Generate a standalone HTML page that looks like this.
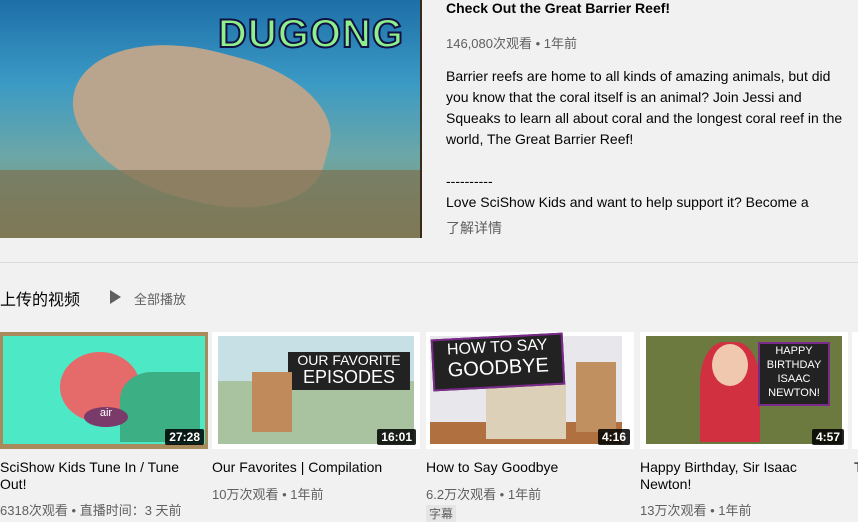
<!DOCTYPE html>
<html><head><meta charset="utf-8"><style>
body{margin:0;width:858px;height:516px;overflow:hidden;background:#f1f1f1;font-family:"Liberation Sans","Noto Sans CJK SC",sans-serif;position:relative}
.a{position:absolute}
.big{left:0;top:0;width:420px;height:238px;background:linear-gradient(180deg,#1d6fa8 0%,#3b9ac4 35%,#6ba7a8 65%,#8a8a60 100%);border-right:2px solid #3a2a1a;overflow:hidden}
.t{color:#030303;font-size:14px}
.g{color:#606060;font-size:13px}
.th{top:332px;width:208px;height:117px;overflow:hidden}
.dur{background:rgba(0,0,0,.85);color:#fff;font-size:12px;font-weight:bold;padding:1px 4px;border-radius:2px;right:4px;bottom:4px}
.ti{font-size:14px;color:#030303;line-height:17px;top:459px;width:200px}
.m{font-size:13px;color:#606060;top:484px}
</style></head><body>
<div class="a big">
  <div class="a" style="left:70px;top:50px;width:260px;height:150px;border-radius:50% 40% 45% 50%;background:#b9a58e;transform:rotate(15deg)"></div>
  <div class="a" style="left:0;top:170px;width:420px;height:68px;background:#7a7050;opacity:.7"></div>
  <div class="a" style="left:218px;top:12px;font-size:40px;font-weight:bold;color:#8ef08a;letter-spacing:1px;-webkit-text-stroke:2px #114">DUGONG</div>
</div>
<div class="a t" style="left:446px;top:0;font-weight:bold">Check Out the Great Barrier Reef!</div>
<div class="a g" style="left:446px;top:33px">146,080次观看 • 1年前</div>
<div class="a t" style="left:446px;top:66px;line-height:21px;width:410px">Barrier reefs are home to all kinds of amazing animals, but did you know that the coral itself is an animal? Join Jessi and Squeaks to learn all about coral and the longest coral reef in the world, The Great Barrier Reef!<br><br>----------<br>Love SciShow Kids and want to help support it? Become a</div>
<div class="a g" style="left:446px;top:218px;font-size:14px">了解详情</div>
<div class="a" style="left:0;top:262px;width:858px;height:1px;background:#dcdcdc"></div>
<div class="a" style="left:0;top:286px;font-size:16px;color:#030303">上传的视频</div>
<div class="a" style="left:110px;top:290px;width:0;height:0;border-left:11px solid #606060;border-top:7px solid transparent;border-bottom:7px solid transparent"></div>
<div class="a g" style="left:134px;top:289px">全部播放</div>

<div class="a th" style="left:0;background:#a88a5c"><div class="a" style="left:3px;top:4px;width:202px;height:108px;background:#4de8c6"></div><div class="a" style="left:60px;top:20px;width:80px;height:70px;border-radius:50%;background:#e56a6a"></div><div class="a" style="left:120px;top:40px;width:80px;height:70px;background:#3daf85;border-radius:40% 0 0 0"></div><div class="a" style="left:84px;top:75px;width:44px;height:20px;border-radius:50%;background:#7a3a6a;color:#fff;font-size:11px;text-align:center">air</div><div class="a dur">27:28</div></div>
<div class="a th" style="left:212px;background:#fff"><div class="a" style="left:6px;top:4px;width:196px;height:108px;background:#a9c3a0"></div><div class="a" style="left:6px;top:4px;width:196px;height:45px;background:#c6e0e6"></div><div class="a" style="left:76px;top:20px;width:122px;height:38px;background:#222;color:#fff;font-size:14px;text-align:center;line-height:17px">OUR FAVORITE<br><span style="font-size:18px">EPISODES</span></div><div class="a" style="left:40px;top:40px;width:40px;height:60px;background:#c08a5a"></div><div class="a dur">16:01</div></div>
<div class="a th" style="left:426px;background:#fff"><div class="a" style="left:4px;top:4px;width:192px;height:108px;background:#e8e8ec"></div><div class="a" style="left:4px;top:90px;width:192px;height:22px;background:#b07040"></div><div class="a" style="left:60px;top:52px;width:80px;height:55px;background:#ddd0b8"></div><div class="a" style="left:150px;top:30px;width:40px;height:70px;background:#c09060"></div><div class="a" style="left:6px;top:4px;width:128px;height:48px;background:#222;border:2px solid #7a2a8a;color:#fff;font-size:16px;text-align:center;line-height:20px;transform:rotate(-3deg)">HOW TO SAY<br><span style="font-size:20px">GOODBYE</span></div><div class="a dur">4:16</div></div>
<div class="a th" style="left:640px;background:#fff"><div class="a" style="left:6px;top:4px;width:196px;height:108px;background:#6c7a40"></div><div class="a" style="left:60px;top:10px;width:60px;height:100px;background:#d03040;border-radius:40% 40% 0 0"></div><div class="a" style="left:72px;top:12px;width:36px;height:42px;background:#f0c8b0;border-radius:50%"></div><div class="a" style="left:118px;top:10px;width:68px;height:60px;background:#222;border:2px solid #7a2a8a;color:#fff;font-size:11px;text-align:center;line-height:14px">HAPPY<br>BIRTHDAY<br>ISAAC<br>NEWTON!</div><div class="a dur">4:57</div></div>
<div class="a th" style="left:852px;width:6px;background:#fff"></div>

<div class="a ti" style="left:0">SciShow Kids Tune In / Tune Out!</div>
<div class="a m" style="left:0;top:500px">6318次观看 • 直播时间：3 天前</div>
<div class="a ti" style="left:212px">Our Favorites | Compilation</div>
<div class="a m" style="left:212px">10万次观看 • 1年前</div>
<div class="a ti" style="left:426px">How to Say Goodbye</div>
<div class="a m" style="left:426px">6.2万次观看 • 1年前</div>
<div class="a" style="left:426px;top:505px;background:#e5e5e5;color:#606060;font-size:12px;padding:0 3px">字幕</div>
<div class="a ti" style="left:640px;width:190px">Happy Birthday, Sir Isaac Newton!</div>
<div class="a m" style="left:640px;top:500px">13万次观看 • 1年前</div>
<div class="a ti" style="left:854px">T</div>
</body></html>
